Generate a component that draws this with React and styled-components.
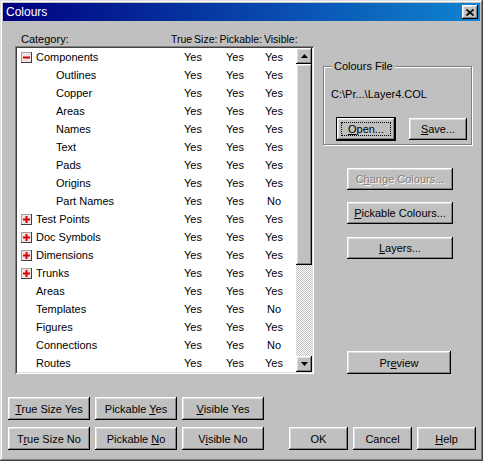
import React from "react";
import styled, { createGlobalStyle, css } from "styled-components";

const GlobalStyle = createGlobalStyle`
  html, body {
    margin: 0;
    padding: 0;
    background: #c0c0c0;
  }
  body {
    font-family: "Liberation Sans", Arial, sans-serif;
    font-size: 11px;
    color: #000;
  }
`;

const raised = css`
  box-shadow: inset -1px -1px #000, inset 1px 1px #fff, inset -2px -2px #808080,
    inset 2px 2px #dfdfdf;
`;

const Window = styled.div`
  width: 483px;
  height: 461px;
  box-sizing: border-box;
  padding: 3px;
  background: #c0c0c0;
  display: flex;
  flex-direction: column;
  box-shadow: inset -1px -1px #404040, inset 1px 1px #dfdfdf,
    inset -2px -2px #808080, inset 2px 2px #fff;
`;

const TitleBar = styled.div`
  height: 18px;
  display: flex;
  align-items: center;
  padding-left: 3px;
  background: linear-gradient(to right, #000080, #1084d0);
  color: #fff;
  font-size: 12px;
`;

const TitleText = styled.span`
  flex: 1;
`;

const CloseBox = styled.div`
  width: 16px;
  height: 14px;
  margin-right: 2px;
  background: #c0c0c0;
  display: flex;
  align-items: center;
  justify-content: center;
  ${raised}
`;

const Client = styled.div`
  flex: 1;
  display: flex;
  flex-direction: column;
  padding: 12px 4px 0 5px;
`;

const Top = styled.div`
  display: flex;
  padding-left: 7px;
`;

const LeftPane = styled.div`
  width: 299px;
  display: flex;
  flex-direction: column;
`;

const HeaderRow = styled.div`
  display: flex;
  height: 13px;
  line-height: 13px;
  white-space: nowrap;
`;

const HeaderCell = styled.span`
  width: ${(p) => p.$w}px;
  padding-left: ${(p) => p.$pad || 0}px;
  box-sizing: border-box;
`;

const ColumnTitles = styled.span`
  font-size: 10.5px;
  word-spacing: -1px;
`;

const ListBox = styled.div`
  height: 328px;
  box-sizing: border-box;
  padding: 2px;
  background: #fff;
  display: flex;
  box-shadow: inset 1px 1px #808080, inset -1px -1px #fff, inset 2px 2px #404040,
    inset -2px -2px #dfdfdf;
`;

const Rows = styled.div`
  flex: 1;
`;

const Row = styled.div`
  display: grid;
  grid-template-columns: 155px 42px 42px 36px;
  height: 18px;
  align-items: center;
  white-space: nowrap;
`;

const NameCell = styled.div`
  display: flex;
  align-items: center;
  gap: 4px;
  padding-left: ${(p) => (p.$level === "group" ? 4 : p.$level === "top" ? 19 : 39)}px;
`;

const ValueCell = styled.div`
  text-align: center;
`;

const ScrollBar = styled.div`
  width: 16px;
  display: flex;
  flex-direction: column;
`;

const ScrollButton = styled.div`
  width: 16px;
  height: 16px;
  background: #c0c0c0;
  display: flex;
  align-items: center;
  justify-content: center;
  ${raised}
`;

const Thumb = styled.div`
  height: 201px;
  background: #c0c0c0;
  ${raised}
`;

const Track = styled.div`
  flex: 1;
  background: repeating-conic-gradient(#c0c0c0 0 25%, #fff 0 50%) 0 0 / 2px 2px;
`;

const RightPane = styled.div`
  width: 149px;
  margin-left: 9px;
  display: flex;
  flex-direction: column;
`;

const GroupBox = styled.div`
  position: relative;
  margin-top: 33px;
  height: 79px;
  box-sizing: border-box;
  border: 1px solid #808080;
  box-shadow: 1px 1px 0 #fff, inset 1px 1px 0 #fff;
  padding: 21px 0 0 7px;
`;

const GroupLabel = styled.span`
  position: absolute;
  top: -7px;
  left: 8px;
  padding: 0 2px;
  line-height: 13px;
  background: #c0c0c0;
`;

const PathText = styled.div`
  line-height: 13px;
`;

const FileButtons = styled.div`
  display: flex;
  gap: 14px;
  margin: 17px 0 0 6px;
`;

const Button = styled.button`
  position: relative;
  width: ${(p) => p.$w || 82}px;
  height: ${(p) => p.$h || 23}px;
  margin: 0;
  padding: 0;
  border: none;
  background: #c0c0c0;
  font-family: inherit;
  font-size: 11px;
  color: #000;
  ${raised}
  ${(p) =>
    p.$default &&
    css`
      outline: 1px solid #000;
      &::after {
        content: "";
        position: absolute;
        inset: 4px;
        border: 1px dotted #000;
      }
    `}
  ${(p) =>
    p.disabled &&
    css`
      color: #808080;
      text-shadow: 1px 1px 0 #fff;
    `}
`;

const SideButton = styled(Button)`
  margin-left: 24px;
  margin-top: ${(p) => p.$mt}px;
`;

const PreviewButton = styled(Button)`
  margin-left: 24px;
  margin-top: auto;
`;

const Footer = styled.div`
  display: flex;
  justify-content: space-between;
  align-items: flex-end;
  margin-top: 23px;
`;

const ToggleGrid = styled.div`
  display: grid;
  grid-template-columns: repeat(3, 82px);
  column-gap: 5px;
  row-gap: 7px;
`;

const DialogButtons = styled.div`
  display: flex;
  gap: 5px;
`;

const ExpandIcon = ({ open }) => (
  <svg width="11" height="11" viewBox="0 0 11 11">
    <rect x="0" y="0" width="11" height="11" fill="#404040" />
    <rect x="0" y="0" width="10" height="10" fill="#a0a0a0" />
    <rect x="1" y="1" width="9" height="9" fill="#f0e4e4" />
    <rect x="2" y="4.5" width="7" height="2" fill="#e00000" />
    {!open && <rect x="4.5" y="2" width="2" height="7" fill="#e00000" />}
  </svg>
);

const Arrow = ({ down }) => (
  <svg width="7" height="4" viewBox="0 0 7 4">
    <polygon points={down ? "0,0 7,0 3.5,4" : "0,4 7,4 3.5,0"} fill="#000" />
  </svg>
);

const rows = [
  { name: "Components", level: "group", open: true, v: ["Yes", "Yes", "Yes"] },
  { name: "Outlines", level: "child", v: ["Yes", "Yes", "Yes"] },
  { name: "Copper", level: "child", v: ["Yes", "Yes", "Yes"] },
  { name: "Areas", level: "child", v: ["Yes", "Yes", "Yes"] },
  { name: "Names", level: "child", v: ["Yes", "Yes", "Yes"] },
  { name: "Text", level: "child", v: ["Yes", "Yes", "Yes"] },
  { name: "Pads", level: "child", v: ["Yes", "Yes", "Yes"] },
  { name: "Origins", level: "child", v: ["Yes", "Yes", "Yes"] },
  { name: "Part Names", level: "child", v: ["Yes", "Yes", "No"] },
  { name: "Test Points", level: "group", v: ["Yes", "Yes", "Yes"] },
  { name: "Doc Symbols", level: "group", v: ["Yes", "Yes", "Yes"] },
  { name: "Dimensions", level: "group", v: ["Yes", "Yes", "Yes"] },
  { name: "Trunks", level: "group", v: ["Yes", "Yes", "Yes"] },
  { name: "Areas", level: "top", v: ["Yes", "Yes", "Yes"] },
  { name: "Templates", level: "top", v: ["Yes", "Yes", "No"] },
  { name: "Figures", level: "top", v: ["Yes", "Yes", "Yes"] },
  { name: "Connections", level: "top", v: ["Yes", "Yes", "No"] },
  { name: "Routes", level: "top", v: ["Yes", "Yes", "Yes"] },
];

export default function App() {
  return (
    <>
      <GlobalStyle />
      <Window>
        <TitleBar>
          <TitleText>Colours</TitleText>
          <CloseBox>
            <svg width="8" height="7" viewBox="0 0 8 7">
              <path d="M0.5 0.5 L7.5 6.5 M7.5 0.5 L0.5 6.5" stroke="#000" strokeWidth="1.6" />
            </svg>
          </CloseBox>
        </TitleBar>
        <Client>
          <Top>
            <LeftPane>
              <HeaderRow>
                <HeaderCell $w={156} $pad={6}>Category:</HeaderCell>
                <ColumnTitles>True Size: Pickable: Visible:</ColumnTitles>
              </HeaderRow>
              <ListBox>
                <Rows>
                  {rows.map((r, i) => (
                    <Row key={i}>
                      <NameCell $level={r.level}>
                        {r.level === "group" && <ExpandIcon open={r.open} />}
                        <span>{r.name}</span>
                      </NameCell>
                      {r.v.map((val, j) => (
                        <ValueCell key={j}>{val}</ValueCell>
                      ))}
                    </Row>
                  ))}
                </Rows>
                <ScrollBar>
                  <ScrollButton>
                    <Arrow />
                  </ScrollButton>
                  <Thumb />
                  <Track />
                  <ScrollButton>
                    <Arrow down />
                  </ScrollButton>
                </ScrollBar>
              </ListBox>
            </LeftPane>
            <RightPane>
              <GroupBox>
                <GroupLabel>Colours File</GroupLabel>
                <PathText>C:\Pr...\Layer4.COL</PathText>
                <FileButtons>
                  <Button $w={58} $h={22} $default>
                    <u>O</u>pen...
                  </Button>
                  <Button $w={58} $h={22}>
                    <u>S</u>ave...
                  </Button>
                </FileButtons>
              </GroupBox>
              <SideButton $w={106} $h={22} $mt={23} disabled>
                C<u>h</u>ange Colours...
              </SideButton>
              <SideButton $w={106} $h={22} $mt={12}>
                <u>P</u>ickable Colours...
              </SideButton>
              <SideButton $w={106} $h={22} $mt={13}>
                <u>L</u>ayers...
              </SideButton>
              <PreviewButton $w={104} $h={23}>
                Pr<u>e</u>view
              </PreviewButton>
            </RightPane>
          </Top>
          <Footer>
            <ToggleGrid>
              <Button>
                <u>T</u>rue Size Yes
              </Button>
              <Button>
                Pickable <u>Y</u>es
              </Button>
              <Button>
                <u>V</u>isible Yes
              </Button>
              <Button>
                T<u>r</u>ue Size No
              </Button>
              <Button>
                Pickable <u>N</u>o
              </Button>
              <Button>
                V<u>i</u>sible No
              </Button>
            </ToggleGrid>
            <DialogButtons>
              <Button $w={59}>OK</Button>
              <Button $w={59}>Cancel</Button>
              <Button $w={59}>
                <u>H</u>elp
              </Button>
            </DialogButtons>
          </Footer>
        </Client>
      </Window>
    </>
  );
}
